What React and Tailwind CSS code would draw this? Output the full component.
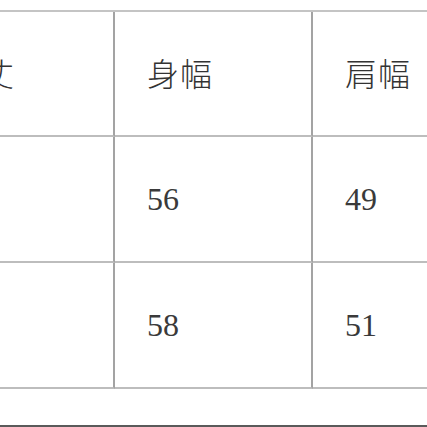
export default function App() {
  const headers = ["着丈", "身幅", "肩幅"];
  const rows = [
    ["", "56", "49"],
    ["", "58", "51"],
  ];

  return (
    <div className="w-[427px] h-[427px] bg-white overflow-hidden flex flex-col">
      <div className="h-[10px]" />
      <div className="ml-[-83px] grid grid-cols-[198px_198px_198px] border-t-2 border-[#c4c4c4]">
        {headers.map((h, i) => (
          <div
            key={h}
            className={
              "h-[125px] flex items-center pl-[32px] pb-[4px] border-b-2 border-[#bdbdbd] text-[32px] font-light tracking-[1px] text-[#333333] " +
              (i < 2 ? "border-r-2 border-r-[#a3a3a3]" : "")
            }
            style={{ fontFamily: '"Noto Sans CJK JP", sans-serif' }}
          >
            {h}
          </div>
        ))}
        {rows.map((r, ri) =>
          r.map((c, i) => (
            <div
              key={ri + "-" + i}
              className={
                "h-[126px] flex items-center pl-[32px] border-b-2 border-[#bdbdbd] text-[32px] text-[#3a3a3a] " +
                (i < 2 ? "border-r-2 border-r-[#a3a3a3]" : "")
              }
              style={{ fontFamily: '"Liberation Serif", serif' }}
            >
              {c}
            </div>
          ))
        )}
      </div>
      <div className="flex-1" />
      <div className="h-[2px] bg-[#5a5a5a]" />
    </div>
  );
}
